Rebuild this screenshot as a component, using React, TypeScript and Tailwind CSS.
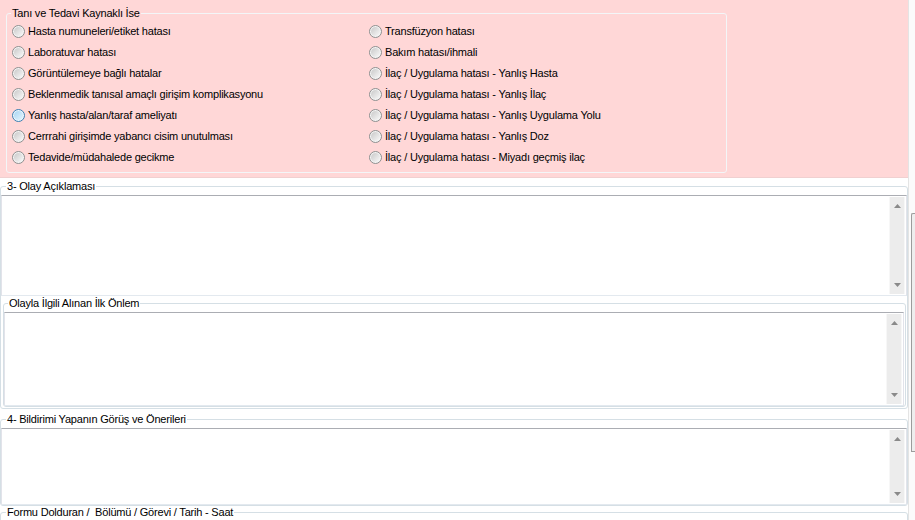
import React from "react";

const LEFT = [
  "Hasta numuneleri/etiket hatası",
  "Laboratuvar hatası",
  "Görüntülemeye bağlı hatalar",
  "Beklenmedik tanısal amaçlı girişim komplikasyonu",
  "Yanlış hasta/alan/taraf ameliyatı",
  "Cerrrahi girişimde yabancı cisim unutulması",
  "Tedavide/müdahalede gecikme",
];

const RIGHT = [
  "Transfüzyon hatası",
  "Bakım hatası/ihmali",
  "İlaç / Uygulama hatası - Yanlış Hasta",
  "İlaç / Uygulama hatası - Yanlış İlaç",
  "İlaç / Uygulama hatası - Yanlış Uygulama Yolu",
  "İlaç / Uygulama hatası - Yanlış Doz",
  "İlaç / Uygulama hatası - Miyadı geçmiş ilaç",
];

function Radio({ label, hover }: { label: string; hover?: boolean }) {
  return (
    <label className="flex h-[21px] items-center gap-[3px]">
      <span
        className={
          hover
            ? "flex h-[13px] w-[13px] items-center justify-center rounded-full border border-[#3c7fb1] bg-[#eaf6fd]"
            : "flex h-[13px] w-[13px] items-center justify-center rounded-full border border-[#8e8f8f] bg-[#f4f4f4]"
        }
      >
        <span
          className={
            hover
              ? "h-[9px] w-[9px] rounded-full bg-linear-to-br from-[#a9d6f3] to-[#e4f4fc]"
              : "h-[9px] w-[9px] rounded-full bg-linear-to-br from-[#c9c9c9] to-[#f9f9f9]"
          }
        />
      </span>
      <span className="whitespace-nowrap">{label}</span>
    </label>
  );
}

function Arrow({ up }: { up?: boolean }) {
  return (
    <div className="flex h-[18px] items-center justify-center">
      <svg width="7" height="4" viewBox="0 0 7 4">
        {up ? (
          <polygon points="3.5,0 7,4 0,4" fill="#8a8a8a" />
        ) : (
          <polygon points="0,0 7,0 3.5,4" fill="#8a8a8a" />
        )}
      </svg>
    </div>
  );
}

function TextBox({ h }: { h: string }) {
  return (
    <div
      className={`flex ${h} border border-t-[#abadb3] border-x-[#e2e3ea] border-b-[#e3e9ef] bg-white`}
    >
      <div className="flex-1" />
      <div className="my-[1px] mr-[1px] flex w-[16px] flex-col justify-between border-x border-[#f7f7f7] bg-[#ececec]">
        <Arrow up />
        <Arrow />
      </div>
    </div>
  );
}

export default function App() {
  return (
    <div
      className="flex h-[520px] w-[915px] overflow-hidden bg-white text-[11px] leading-[13px] tracking-[-0.2px] text-black"
      style={{ fontFamily: '"Liberation Sans", Arial, sans-serif' }}
    >
      <div className="flex w-[908px] shrink-0 flex-col">
        <div className="h-[178px] shrink-0 border-b border-[#f0d0d0] bg-[#ffd7d7] pl-[6px] pt-[7px]">
          <fieldset className="w-[721px] rounded-[3px] border border-[#f3f6f8] pb-[4px] pt-[1px]">
            <legend className="ml-[4px] px-[1px]">Tanı ve Tedavi Kaynaklı İse</legend>
            <div className="grid grid-cols-[357px_1fr] pl-[5px]">
              <div className="flex flex-col">
                {LEFT.map((l, i) => (
                  <Radio key={l} label={l} hover={i === 4} />
                ))}
              </div>
              <div className="flex flex-col">
                {RIGHT.map((l) => (
                  <Radio key={l} label={l} />
                ))}
              </div>
            </div>
          </fieldset>
        </div>

        <fieldset className="mt-[2px] shrink-0 rounded-[3px] border border-[#d5dfe5] pb-[1px]">
          <legend className="ml-[5px] px-[1px]">3- Olay Açıklaması</legend>
          <div className="mt-[2px]">
            <TextBox h="h-[101px]" />
          </div>
          <fieldset className="ml-[2px] mr-[1px] mt-[1px] rounded-[3px] border border-[#d5dfe5]">
            <legend className="ml-[4px] px-[1px]">Olayla İlgili Alınan İlk Önlem</legend>
            <div className="mr-[1px] mt-[2px]">
              <TextBox h="h-[94px]" />
            </div>
          </fieldset>
        </fieldset>

        <fieldset className="mt-[4px] shrink-0 rounded-[3px] border border-[#d5dfe5]">
          <legend className="ml-[5px] px-[1px]">4- Bildirimi Yapanın Görüş ve Önerileri</legend>
          <div className="mt-[2px]">
            <TextBox h="h-[77px]" />
          </div>
        </fieldset>

        <fieldset className="h-[40px] shrink-0 rounded-[3px] border border-[#d5dfe5]">
          <legend className="ml-[5px] whitespace-pre px-[1px]">
            Formu Dolduran /  Bölümü / Görevi / Tarih - Saat
          </legend>
        </fieldset>
      </div>

      <div className="flex flex-1 flex-col border-l border-[#e4e4e4] bg-[#fbfbfb] pl-[2px]">
        <div className="mt-[213px] h-[239px] rounded-tl-[2px] border-l border-t border-b border-[#9c9c9c] bg-[#eeeeee]" />
      </div>
    </div>
  );
}
